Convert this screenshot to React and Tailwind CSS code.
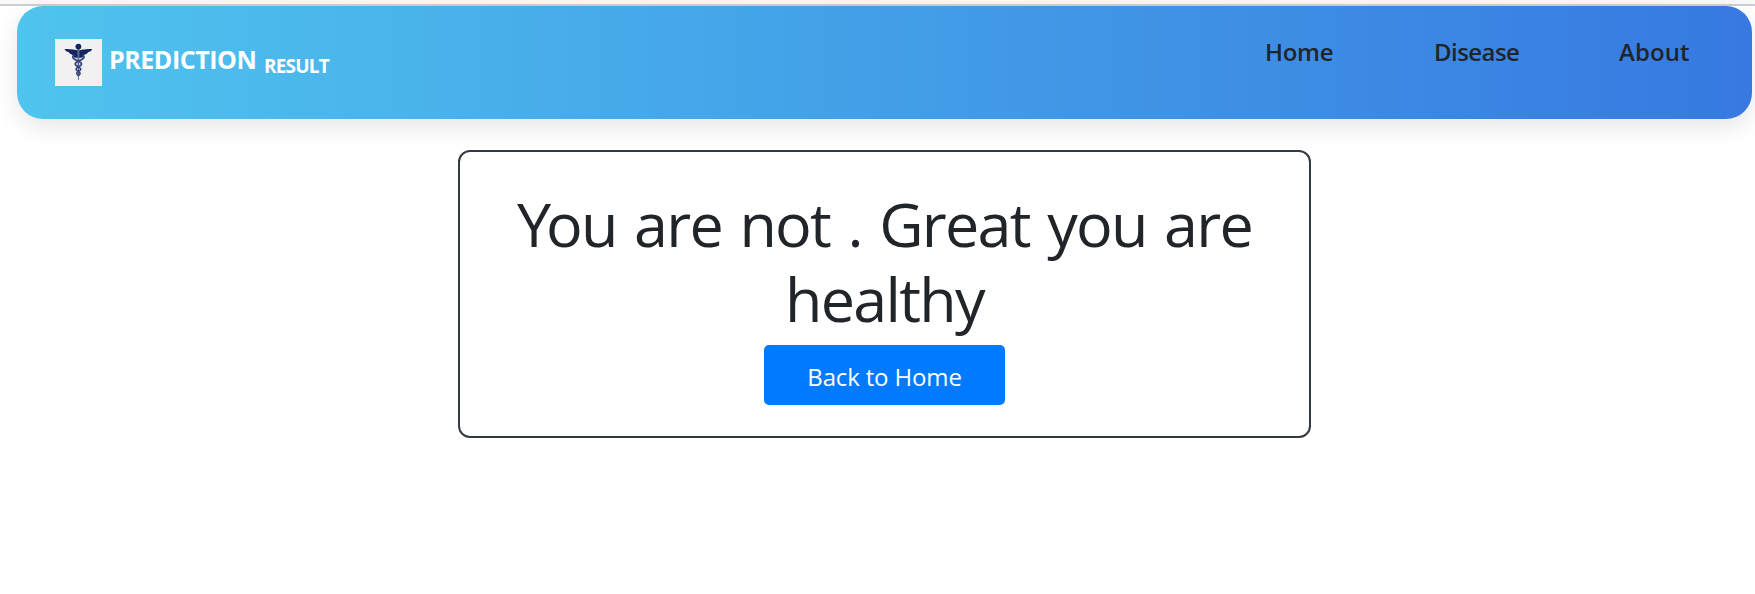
const links = [
  { label: "Home", box: "w-[69px] tracking-[-0.3px] whitespace-nowrap" },
  { label: "Disease", box: "w-[85px] tracking-[-0.55px] whitespace-nowrap" },
  { label: "About", box: "w-[71px] tracking-[0.1px] whitespace-nowrap" },
];

function Caduceus() {
  return (
    <svg viewBox="0 0 47 47" className="h-[47px] w-[47px] shrink-0 bg-[#f1f1f2]" fill="none" aria-hidden="true">
      <circle cx="23.4" cy="7.6" r="2.9" fill="#14245f" />
      <path
        d="M9.500 10c4 .2 8 .1 10.500.8l3.400.7 3.400-.7c2.500-.7 6.500-.6 10.500-.8-.8 1.800-2.500 2.900-4.300 3.300-.6 1.400-2 2.100-3.500 2.400-.6 1.600-1.600 2.600-2.700 3h-6.800c-1.100-.4-2.100-1.400-2.700-3-1.500-.3-2.900-1-3.500-2.400-1.800-.4-3.500-1.500-4.300-3.300z"
        fill="#14245f"
      />
      <path d="M22.200 10h2.400l-.8 31h-.8z" fill="#53648f" />
      <path
        d="M19.500 16c-3.500 2-1.500 4.200 3.900 6.200 4.300 1.600 4 4 0 5.700-3.300 1.500-3 3.300 0 4.600 2.300 1.200 2 2.800 0 4"
        stroke="#33447a"
        strokeWidth="1.700"
      />
      <path
        d="M27.300 16c3.500 2 1.500 4.200-3.900 6.200-4.300 1.600-4 4 0 5.700 3.300 1.500 3 3.300 0 4.600-2.300 1.200-2 2.800 0 4"
        stroke="#33447a"
        strokeWidth="1.700"
      />
    </svg>
  );
}

export default function App() {
  return (
    <div className="h-[594px] overflow-hidden bg-white font-['Open_Sans','Noto_Sans',sans-serif] text-[#212529]">
      <div className="h-1 bg-[#f9f9fc]" />
      <div className="h-0.5 bg-[#cfcfd1]" />
      <header className="mr-[3px] ml-[17px] flex h-[113px] items-start justify-between rounded-[26px] bg-[linear-gradient(90deg,#4fc4ee,#3779e1)] pr-[62px] pl-[38px] shadow-[0_8px_24px_rgba(0,0,0,0.1)]">
        <div className="flex items-start pt-[33px] leading-9 whitespace-nowrap text-white">
          <Caduceus />
          <span className="ml-[6px] w-[156px] pt-[2px] pl-px text-[25px] font-bold tracking-[-0.45px]">PREDICTION</span>
          <span className="pt-[9px] text-[19px] font-bold tracking-[-0.8px]">RESULT</span>
        </div>
        <nav className="flex gap-[100px] pt-[28px] text-[24px] leading-9 font-semibold">
          {links.map((link) => (
            <a key={link.label} href="#" className={link.box}>
              {link.label}
            </a>
          ))}
        </nav>
      </header>
      <main className="mt-[31px] ml-[458px] flex h-[288px] w-[853px] flex-col items-center rounded-[12px] border-2 border-[#343a40] pt-[34px]">
        <h1 className="w-[780px] text-center text-[61px] leading-[75px] font-normal tracking-[-1.7px] [word-spacing:3.2px]">
          <span className="tracking-[-5px]">Y</span>ou are not . Great you are
          <br />
          healthy
        </h1>
        <a
          href="#"
          className="mt-[9px] flex h-[60px] w-[241px] items-center justify-center rounded-[5px] bg-[#007bff] pt-[4px] text-[24px] tracking-[-0.15px] whitespace-nowrap text-white"
        >
          Back to Home
        </a>
      </main>
    </div>
  );
}
